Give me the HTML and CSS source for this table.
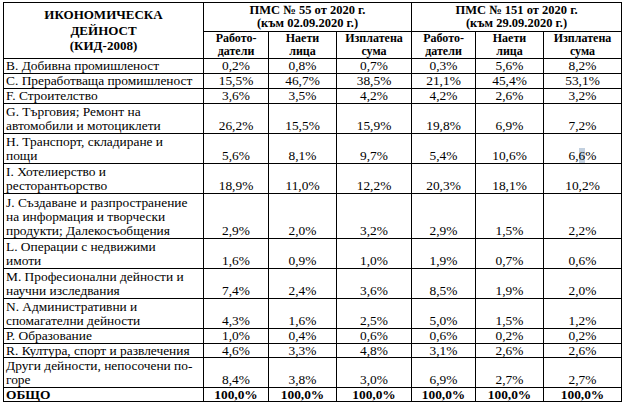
FILE: index.html
```html
<!DOCTYPE html>
<html lang="bg">
<head>
<meta charset="utf-8">
<title>ПМС</title>
<link rel="stylesheet" href="styles.css">
</head>
<body>
<table class="tbl">
  <colgroup>
    <col class="c-act">
    <col class="c-a"><col class="c-b"><col class="c-c">
    <col class="c-d"><col class="c-e"><col class="c-f">
  </colgroup>
  <thead>
    <tr class="h1">
      <th rowspan="2" class="hl">ИКОНОМИЧЕСКА<br>ДЕЙНОСТ<br>(КИД-2008)</th>
      <th colspan="3" class="hg">ПМС № 55 от 2020 г.<br>(към 02.09.2020 г.)</th>
      <th colspan="3" class="hg">ПМС № 151 от 2020 г.<br>(към 29.09.2020 г.)</th>
    </tr>
    <tr class="h2">
      <th class="hs">Работо-<br>датели</th>
      <th class="hs">Наети<br>лица</th>
      <th class="hs">Изплатена<br>сума</th>
      <th class="hs">Работо-<br>датели</th>
      <th class="hs">Наети<br>лица</th>
      <th class="hs">Изплатена<br>сума</th>
    </tr>
  </thead>
  <tbody>
    <tr class="r1"><td class="lbl">В. Добивна промишленост</td><td>0,2%</td><td>0,8%</td><td>0,7%</td><td>0,3%</td><td>5,6%</td><td>8,2%</td></tr>
    <tr class="r1"><td class="lbl">С. Преработваща промишленост</td><td>15,5%</td><td>46,7%</td><td>38,5%</td><td>21,1%</td><td>45,4%</td><td>53,1%</td></tr>
    <tr class="r1"><td class="lbl">F. Строителство</td><td>3,6%</td><td>3,5%</td><td>4,2%</td><td>4,2%</td><td>2,6%</td><td>3,2%</td></tr>
    <tr class="r2"><td class="lbl">G. Търговия; Ремонт на<br>автомобили и мотоциклети</td><td>26,2%</td><td>15,5%</td><td>15,9%</td><td>19,8%</td><td>6,9%</td><td>7,2%</td></tr>
    <tr class="r2"><td class="lbl">Н. Транспорт, складиране и<br>пощи</td><td>5,6%</td><td>8,1%</td><td>9,7%</td><td>5,4%</td><td>10,6%</td><td>6,<span class="sel">6</span>%</td></tr>
    <tr class="r2"><td class="lbl">I. Хотелиерство и<br>ресторантьорство</td><td>18,9%</td><td>11,0%</td><td>12,2%</td><td>20,3%</td><td>18,1%</td><td>10,2%</td></tr>
    <tr class="r3"><td class="lbl">J. Създаване и разпространение<br>на информация и творчески<br>продукти; Далекосъобщения</td><td>2,9%</td><td>2,0%</td><td>3,2%</td><td>2,9%</td><td>1,5%</td><td>2,2%</td></tr>
    <tr class="r2"><td class="lbl">L. Операции с недвижими<br>имоти</td><td>1,6%</td><td>0,9%</td><td>1,0%</td><td>1,9%</td><td>0,7%</td><td>0,6%</td></tr>
    <tr class="r2"><td class="lbl">М. Професионални дейности и<br>научни изследвания</td><td>7,4%</td><td>2,4%</td><td>3,6%</td><td>8,5%</td><td>1,9%</td><td>2,0%</td></tr>
    <tr class="r2"><td class="lbl">N. Административни и<br>спомагателни дейности</td><td>4,3%</td><td>1,6%</td><td>2,5%</td><td>5,0%</td><td>1,5%</td><td>1,2%</td></tr>
    <tr class="r1"><td class="lbl">Р. Образование</td><td>1,0%</td><td>0,4%</td><td>0,6%</td><td>0,6%</td><td>0,2%</td><td>0,2%</td></tr>
    <tr class="r1s"><td class="lbl">R. Култура, спорт и развлечения</td><td>4,6%</td><td>3,3%</td><td>4,8%</td><td>3,1%</td><td>2,6%</td><td>2,6%</td></tr>
    <tr class="r2"><td class="lbl">Други дейности, непосочени по-<br>горе</td><td>8,4%</td><td>3,8%</td><td>3,0%</td><td>6,9%</td><td>2,7%</td><td>2,7%</td></tr>
    <tr class="r1s tot"><td class="lbl">ОБЩО</td><td>100,0%</td><td>100,0%</td><td>100,0%</td><td>100,0%</td><td>100,0%</td><td>100,0%</td></tr>
  </tbody>
</table>
</body>
</html>
```

FILE: styles.css
```css
html, body {
  margin: 0;
  padding: 0;
  background: #ffffff;
}

body {
  padding: 2px 0 0 3px;
  font-family: "Liberation Serif", "Times New Roman", serif;
  color: #000;
}

.tbl {
  border-collapse: collapse;
  table-layout: fixed;
  width: 618px;
  font-size: 13.4px;
}

.c-act { width: 200px; }
.c-a { width: 65px; }
.c-b { width: 68px; }
.c-c { width: 75px; }
.c-d { width: 64px; }
.c-e { width: 68px; }
.c-f { width: 78px; }

.tbl th,
.tbl td {
  border: 1px solid #000;
  padding: 0;
}

.tbl th {
  font-weight: bold;
  text-align: center;
  vertical-align: middle;
}

.hl {
  font-size: 13px;
  line-height: 15.5px;
}

.h1 .hg {
  height: 28px;
  font-size: 12.5px;
  line-height: 13px;
}

.h2 .hs {
  height: 26px;
  font-size: 12px;
  line-height: 13px;
}

.tbl td {
  text-align: center;
  vertical-align: bottom;
  line-height: 14px;
  white-space: nowrap;
}

.tbl td.lbl {
  text-align: left;
  padding-left: 2px;
}

.r1 td { height: 14px; }
.r1s td { height: 13px; line-height: 13px; }
.r2 td { height: 29px; }
.r3 td { height: 44px; }

.tot td {
  font-weight: bold;
}

.sel {
  background: rgba(120, 150, 185, 0.45);
}
```
